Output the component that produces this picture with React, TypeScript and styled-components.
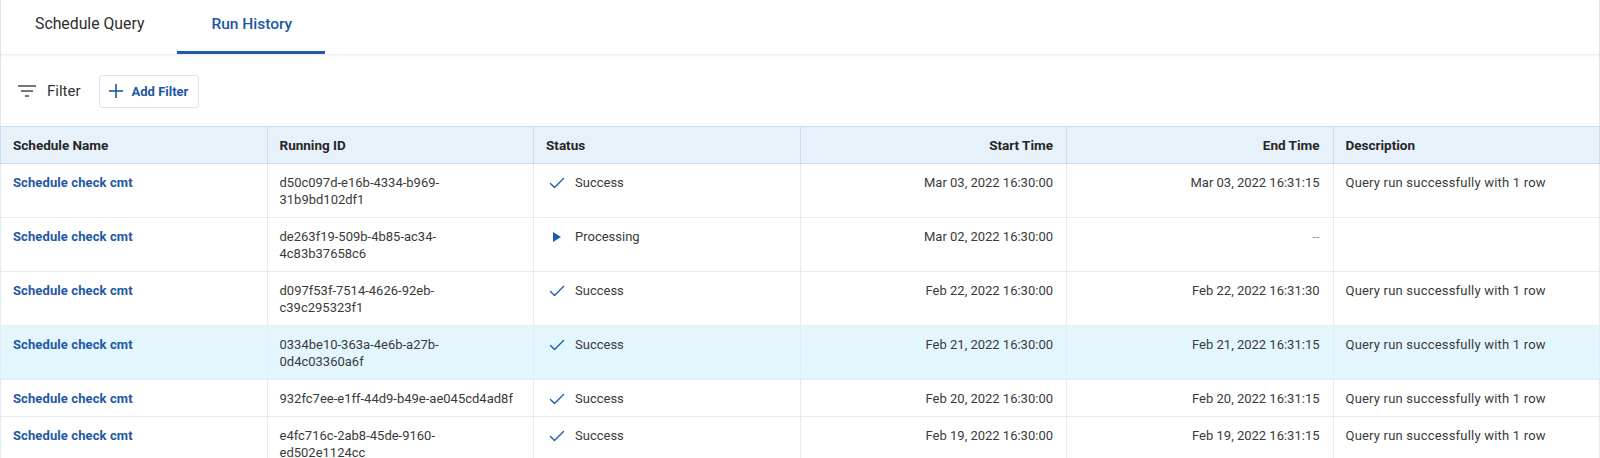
import React from "react";
import styled, { createGlobalStyle } from "styled-components";

const GlobalStyle = createGlobalStyle`
  html, body {
    margin: 0;
    padding: 0;
    background: #ffffff;
    font-family: Roboto, "Liberation Sans", Arial, sans-serif;
    overflow: hidden;
  }
  * { box-sizing: border-box; }
`;

const Page = styled.div`
  width: 1600px;
  height: 458px;
  display: flex;
  flex-direction: column;
  background: #fff;
  overflow: hidden;
`;

const TabBar = styled.div`
  display: flex;
  align-items: stretch;
  height: 54px;
  flex-shrink: 0;
  border-left: 1px solid #e2e4f2;
  border-right: 1px solid #e2e4f2;
  box-shadow: 0 1px 3px rgba(0, 0, 0, 0.09);
  position: relative;
  z-index: 1;
`;

const Tab = styled.div<{ $active?: boolean }>`
  display: flex;
  align-items: center;
  padding: 0 33px 4px 34px;
  font-size: ${(p) => (p.$active ? "15.5px" : "15.8px")};
  font-weight: ${(p) => (p.$active ? 500 : 400)};
  color: ${(p) => (p.$active ? "#1c57a5" : "#2e2e2e")};
  border-bottom: 3px solid ${(p) => (p.$active ? "#1c5cb0" : "transparent")};
`;

const Toolbar = styled.div`
  display: flex;
  align-items: center;
  height: 72px;
  flex-shrink: 0;
  padding: 2px 0 0 14px;
  border-left: 1px solid #e2e4f2;
  border-right: 1px solid #e2e4f2;
`;

const FilterLabel = styled.div`
  display: flex;
  align-items: center;
  gap: 8px;
  font-size: 15px;
  color: #333;
  margin-right: 18px;
`;

const AddButton = styled.button`
  display: flex;
  align-items: center;
  gap: 8px;
  height: 33px;
  padding: 0 10px 0 8px;
  border: 1px solid #dfe3e8;
  border-radius: 3px;
  background: #fff;
  font-family: inherit;
  font-size: 13px;
  font-weight: 700;
  color: #1c57a5;
`;

const Table = styled.table`
  width: 1600px;
  table-layout: fixed;
  border-collapse: collapse;
  font-size: 13px;
  color: #3a3a3a;
`;

const Th = styled.th<{ $right?: boolean }>`
  background: #e7f1fa;
  border: 1px solid #c8ddf1;
  padding: 10px 13px 9px 12px;
  line-height: 17px;
  font-size: 13.5px;
  font-weight: 700;
  color: #262626;
  text-align: ${(p) => (p.$right ? "right" : "left")};
`;

const Tr = styled.tr<{ $highlight?: boolean }>`
  background: ${(p) => (p.$highlight ? "#e3f6fd" : "#ffffff")};
`;

const Td = styled.td<{ $right?: boolean; $muted?: boolean; $wide?: boolean }>`
  border: 1px solid #e4ecf1;
  padding: 10px ${(p) => (p.$wide ? "20px" : "13px")} 9px 12px;
  line-height: 17px;
  vertical-align: top;
  text-align: ${(p) => (p.$right ? "right" : "left")};
  color: ${(p) => (p.$muted ? "#9a9a9a" : "#3a3a3a")};
  word-wrap: break-word;
`;

const Description = styled.span`
  letter-spacing: 0.2px;
`;

const NameLink = styled.span`
  color: #1f58a6;
  font-weight: 700;
  letter-spacing: 0.1px;
`;

const StatusCell = styled.div`
  display: flex;
  align-items: center;
  gap: 10px;
  padding-left: 3px;
`;

const IconBox = styled.span`
  display: inline-flex;
  width: 16px;
  justify-content: center;
  align-items: center;
`;

const FilterIcon = () => (
  <svg width="24" height="24" viewBox="0 0 24 24" fill="#555">
    <rect x="3" y="6.2" width="18" height="1.6" />
    <rect x="6" y="11.2" width="12" height="1.6" />
    <rect x="10" y="16.2" width="4" height="1.6" />
  </svg>
);

const PlusIcon = () => (
  <svg width="16" height="16" viewBox="0 0 16 16" fill="none" stroke="#1c57a5" strokeWidth="1.6">
    <line x1="8" y1="1" x2="8" y2="15" />
    <line x1="1" y1="8" x2="15" y2="8" />
  </svg>
);

const CheckIcon = () => (
  <svg width="16" height="16" viewBox="0 0 16 16" fill="none" stroke="#1c5cb0" strokeWidth="1.4" strokeLinecap="round" strokeLinejoin="round">
    <polyline points="1.5,8.5 5.5,12.5 14.5,3.5" />
  </svg>
);

const PlayIcon = () => (
  <svg width="10" height="12" viewBox="0 0 10 12" fill="#1c5cb0">
    <polygon points="1,1 9,6 1,11" />
  </svg>
);

type Row = {
  id: string;
  status: "Success" | "Processing";
  start: string;
  end: string;
  desc: string;
  highlight?: boolean;
};

const rows: Row[] = [
  { id: "d50c097d-e16b-4334-b969-31b9bd102df1", status: "Success", start: "Mar 03, 2022 16:30:00", end: "Mar 03, 2022 16:31:15", desc: "Query run successfully with 1 row" },
  { id: "de263f19-509b-4b85-ac34-4c83b37658c6", status: "Processing", start: "Mar 02, 2022 16:30:00", end: "--", desc: "" },
  { id: "d097f53f-7514-4626-92eb-c39c295323f1", status: "Success", start: "Feb 22, 2022 16:30:00", end: "Feb 22, 2022 16:31:30", desc: "Query run successfully with 1 row" },
  { id: "0334be10-363a-4e6b-a27b-0d4c03360a6f", status: "Success", start: "Feb 21, 2022 16:30:00", end: "Feb 21, 2022 16:31:15", desc: "Query run successfully with 1 row", highlight: true },
  { id: "932fc7ee-e1ff-44d9-b49e-ae045cd4ad8f", status: "Success", start: "Feb 20, 2022 16:30:00", end: "Feb 20, 2022 16:31:15", desc: "Query run successfully with 1 row" },
  { id: "e4fc716c-2ab8-45de-9160-ed502e1124cc", status: "Success", start: "Feb 19, 2022 16:30:00", end: "Feb 19, 2022 16:31:15", desc: "Query run successfully with 1 row" },
];

export default function App() {
  return (
    <>
      <GlobalStyle />
      <Page>
        <TabBar>
          <Tab>Schedule Query</Tab>
          <Tab $active>Run History</Tab>
        </TabBar>
        <Toolbar>
          <FilterLabel>
            <FilterIcon />
            Filter
          </FilterLabel>
          <AddButton>
            <PlusIcon />
            Add Filter
          </AddButton>
        </Toolbar>
        <Table>
          <thead>
            <tr>
              <Th>Schedule Name</Th>
              <Th>Running ID</Th>
              <Th>Status</Th>
              <Th $right>Start Time</Th>
              <Th $right>End Time</Th>
              <Th>Description</Th>
            </tr>
          </thead>
          <tbody>
            {rows.map((r) => (
              <Tr key={r.id} $highlight={r.highlight}>
                <Td>
                  <NameLink>Schedule check cmt</NameLink>
                </Td>
                <Td $wide>{r.id}</Td>
                <Td>
                  <StatusCell>
                    <IconBox>{r.status === "Success" ? <CheckIcon /> : <PlayIcon />}</IconBox>
                    {r.status}
                  </StatusCell>
                </Td>
                <Td $right>{r.start}</Td>
                <Td $right $muted={r.end === "--"}>{r.end}</Td>
                <Td>
                  <Description>{r.desc}</Description>
                </Td>
              </Tr>
            ))}
          </tbody>
        </Table>
      </Page>
    </>
  );
}
